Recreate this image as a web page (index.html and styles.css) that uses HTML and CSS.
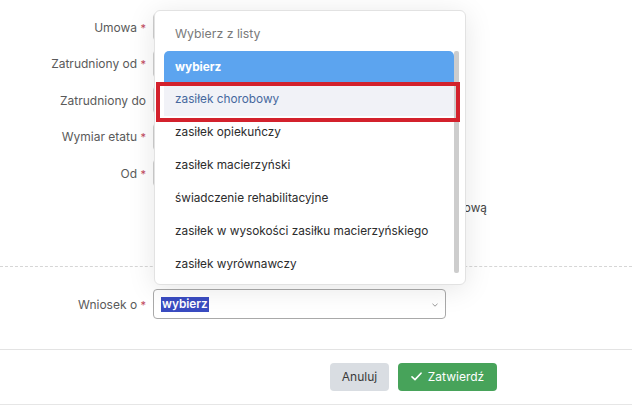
FILE: index.html
```html
<!DOCTYPE html>
<html lang="pl">
<head>
<meta charset="utf-8">
<link rel="stylesheet" href="styles.css">
</head>
<body>
<div class="page">
  <div class="section">
    <div class="row"><div class="label">Umowa <span class="req">*</span></div><div class="field"><div class="input"></div></div></div>
    <div class="row"><div class="label">Zatrudniony od <span class="req">*</span></div><div class="field"><div class="input"></div></div></div>
    <div class="row"><div class="label">Zatrudniony do</div><div class="field"><div class="input"></div></div></div>
    <div class="row"><div class="label">Wymiar etatu <span class="req">*</span></div><div class="field"><div class="input"></div></div></div>
    <div class="row"><div class="label">Od <span class="req">*</span></div><div class="field"><div class="input"></div></div></div>
    <div class="row"><div class="label"></div><div class="field"><div class="check">Zbieg ubezpieczenia z inną umową</div></div></div>
  </div>
  <div class="section lower">
    <div class="row"><div class="label">Wniosek o <span class="req">*</span></div>
      <div class="field"><div class="select"><span class="sel">wybierz</span>
        <svg class="chev" width="8" height="6" viewBox="0 0 8 6"><path d="M1.5 1.8 L4 4.2 L6.5 1.8" fill="none" stroke="#999" stroke-width="1"/></svg>
      </div></div>
    </div>
  </div>
  <div class="footer">
    <button class="btn cancel">Anuluj</button>
    <button class="btn ok"><svg width="11" height="9" viewBox="0 0 11 9"><path d="M1 4.8 L4 7.6 L10 1.2" fill="none" stroke="#fff" stroke-width="1.6" stroke-linecap="round" stroke-linejoin="round"/></svg>Zatwierdź</button>
  </div>

  <div class="dropdown">
    <div class="dd-head">Wybierz z listy</div>
    <div class="dd-body">
      <ul class="options">
        <li class="opt active">wybierz</li>
        <li class="opt hover">zasiłek chorobowy</li>
        <li class="opt">zasiłek opiekuńczy</li>
        <li class="opt">zasiłek macierzyński</li>
        <li class="opt">świadczenie rehabilitacyjne</li>
        <li class="opt">zasiłek w wysokości zasiłku macierzyńskiego</li>
        <li class="opt">zasiłek wyrównawczy</li>
      </ul>
      <div class="scroll"></div>
    </div>
    <div class="mark"></div>
  </div>
</div>
</body>
</html>
```
FILE: styles.css
```css
* { box-sizing: border-box; }
html, body { margin: 0; padding: 0; background: #fff; }
body { font-family: Inter, "Noto Sans", sans-serif; font-size: 12px; color: #555; }
.page { position: relative; width: 632px; height: 405px; overflow: hidden; border-bottom: 1px solid #e6e6e6; }
.section { padding-top: 9px; }
.row { display: grid; grid-template-columns: 146px 1fr; column-gap: 7px; height: 36.5px; align-items: center; }
.label { text-align: right; color: #5a5a5a; white-space: nowrap; }
.req { color: #c0485a; font-size: 11px; }
.field { display: flex; align-items: center; }
.input { width: 293px; height: 28px; border: 1px solid #cfcfcf; border-radius: 4px; }
.check { width: 334px; text-align: right; white-space: nowrap; color: #444; font-size: 11.8px; margin-top: -3px; }
.lower { border-top: 1px dashed #d6d6d6; margin-top: 38px; padding-top: 19px; padding-bottom: 26px; }
.select { width: 293px; height: 30px; border: 1px solid #a9a9a9; border-radius: 4px; display: flex; align-items: center; justify-content: space-between; padding: 0 6px 0 7px; }
.sel { background: #3a4cc1; color: #fff; font-weight: 600; font-size: 11.8px; line-height: 15px; padding: 0 1px; }
.chev { margin-top: 1px; }
.footer { border-top: 1px solid #e3e3e3; display: flex; justify-content: flex-end; gap: 9px; padding: 13px 135px 0 0; }
.btn { height: 28px; border: none; border-radius: 4px; font-family: Inter, "Noto Sans", sans-serif; font-size: 12px; display: flex; align-items: center; justify-content: center; gap: 6px; }
.cancel { width: 59px; background: #d9dde2; color: #3a3a3a; }
.ok { width: 99px; background: #47a35a; color: #fff; }

.dropdown { position: absolute; left: 154px; top: 10px; width: 312px; height: 275px; background: #fff; border: 1px solid #e2e2e2; border-radius: 6px; box-shadow: 0 4px 28px rgba(0,0,0,0.10); }
.dd-head { height: 40px; padding: 15px 0 0 20px; color: #7a7a7a; font-size: 12.3px; }
.dd-body { display: flex; padding-left: 9px; }
.options { list-style: none; margin: 0; padding: 0; width: 290px; }
.opt { height: 33px; line-height: 33px; padding-left: 11px; color: #2c2c2c; font-size: 11.8px; white-space: nowrap; }
.opt.active { background: #5ca4ef; color: #fff; font-weight: 700; border-radius: 5px 5px 0 0; height: 32px; line-height: 32px; }
.opt.hover { background: #f1f2f7; color: #46689e; }
.scroll { width: 5px; height: 222px; background: #cdcdcd; margin-top: 0; border-radius: 2px; }
.mark { position: absolute; left: 1px; top: 71px; width: 304px; height: 40px; border: 4px solid #d3212c; }
```
